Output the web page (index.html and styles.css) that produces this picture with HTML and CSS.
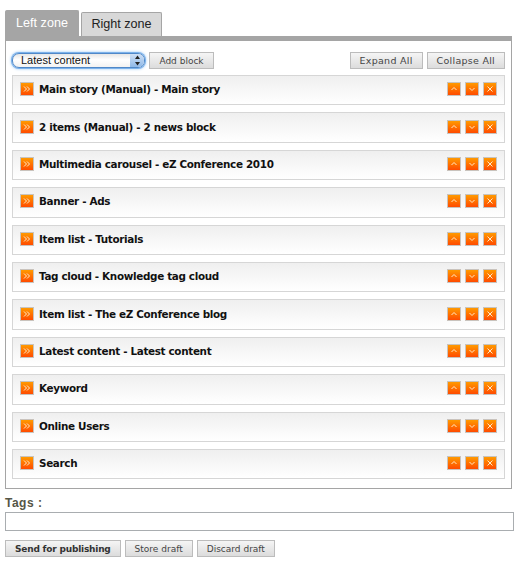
FILE: index.html
```html
<!DOCTYPE html>
<html lang="en">
<head>
<meta charset="utf-8">
<title>Zones</title>
<link rel="stylesheet" href="styles.css">
</head>
<body>
<div class="tabs">
  <a class="tab active">Left zone</a>
  <a class="tab">Right zone</a>
</div>
<div class="panel">
  <div class="toolbar">
    <span class="select-wrap">
      <select class="select"><option>Latest content</option></select>
      <span class="stepper"><svg width="7" height="11" viewBox="0 0 7 11"><path d="M3.5 0.5L6 4H1zM3.5 10.5L1 7H6z" fill="#222"/></svg></span>
    </span>
    <button class="btn add">Add block</button>
    <span class="spacer"></span>
    <button class="btn wide">Expand All</button>
    <button class="btn wide">Collapse All</button>
  </div>
  <div class="block"><span class="ico"><svg width="10" height="10" viewBox="0 0 10 10"><path d="M2 2.5L4.5 5L2 7.5M5 2.5L7.5 5L5 7.5" class="glyph"/></svg></span><span class="title">Main story (Manual) - Main story</span><span class="actions"><span class="ico"><svg width="10" height="10" viewBox="0 0 10 10"><path d="M2.5 6L5 3.5L7.5 6" class="glyph"/></svg></span><span class="ico"><svg width="10" height="10" viewBox="0 0 10 10"><path d="M2.5 4L5 6.5L7.5 4" class="glyph"/></svg></span><span class="ico"><svg width="10" height="10" viewBox="0 0 10 10"><path d="M2.5 2.5L7.5 7.5M7.5 2.5L2.5 7.5" class="glyph"/></svg></span></span></div>
  <div class="block"><span class="ico"><svg width="10" height="10" viewBox="0 0 10 10"><path d="M2 2.5L4.5 5L2 7.5M5 2.5L7.5 5L5 7.5" class="glyph"/></svg></span><span class="title">2 items (Manual) - 2 news block</span><span class="actions"><span class="ico"><svg width="10" height="10" viewBox="0 0 10 10"><path d="M2.5 6L5 3.5L7.5 6" class="glyph"/></svg></span><span class="ico"><svg width="10" height="10" viewBox="0 0 10 10"><path d="M2.5 4L5 6.5L7.5 4" class="glyph"/></svg></span><span class="ico"><svg width="10" height="10" viewBox="0 0 10 10"><path d="M2.5 2.5L7.5 7.5M7.5 2.5L2.5 7.5" class="glyph"/></svg></span></span></div>
  <div class="block"><span class="ico"><svg width="10" height="10" viewBox="0 0 10 10"><path d="M2 2.5L4.5 5L2 7.5M5 2.5L7.5 5L5 7.5" class="glyph"/></svg></span><span class="title">Multimedia carousel - eZ Conference 2010</span><span class="actions"><span class="ico"><svg width="10" height="10" viewBox="0 0 10 10"><path d="M2.5 6L5 3.5L7.5 6" class="glyph"/></svg></span><span class="ico"><svg width="10" height="10" viewBox="0 0 10 10"><path d="M2.5 4L5 6.5L7.5 4" class="glyph"/></svg></span><span class="ico"><svg width="10" height="10" viewBox="0 0 10 10"><path d="M2.5 2.5L7.5 7.5M7.5 2.5L2.5 7.5" class="glyph"/></svg></span></span></div>
  <div class="block"><span class="ico"><svg width="10" height="10" viewBox="0 0 10 10"><path d="M2 2.5L4.5 5L2 7.5M5 2.5L7.5 5L5 7.5" class="glyph"/></svg></span><span class="title">Banner - Ads</span><span class="actions"><span class="ico"><svg width="10" height="10" viewBox="0 0 10 10"><path d="M2.5 6L5 3.5L7.5 6" class="glyph"/></svg></span><span class="ico"><svg width="10" height="10" viewBox="0 0 10 10"><path d="M2.5 4L5 6.5L7.5 4" class="glyph"/></svg></span><span class="ico"><svg width="10" height="10" viewBox="0 0 10 10"><path d="M2.5 2.5L7.5 7.5M7.5 2.5L2.5 7.5" class="glyph"/></svg></span></span></div>
  <div class="block"><span class="ico"><svg width="10" height="10" viewBox="0 0 10 10"><path d="M2 2.5L4.5 5L2 7.5M5 2.5L7.5 5L5 7.5" class="glyph"/></svg></span><span class="title">Item list - Tutorials</span><span class="actions"><span class="ico"><svg width="10" height="10" viewBox="0 0 10 10"><path d="M2.5 6L5 3.5L7.5 6" class="glyph"/></svg></span><span class="ico"><svg width="10" height="10" viewBox="0 0 10 10"><path d="M2.5 4L5 6.5L7.5 4" class="glyph"/></svg></span><span class="ico"><svg width="10" height="10" viewBox="0 0 10 10"><path d="M2.5 2.5L7.5 7.5M7.5 2.5L2.5 7.5" class="glyph"/></svg></span></span></div>
  <div class="block"><span class="ico"><svg width="10" height="10" viewBox="0 0 10 10"><path d="M2 2.5L4.5 5L2 7.5M5 2.5L7.5 5L5 7.5" class="glyph"/></svg></span><span class="title">Tag cloud - Knowledge tag cloud</span><span class="actions"><span class="ico"><svg width="10" height="10" viewBox="0 0 10 10"><path d="M2.5 6L5 3.5L7.5 6" class="glyph"/></svg></span><span class="ico"><svg width="10" height="10" viewBox="0 0 10 10"><path d="M2.5 4L5 6.5L7.5 4" class="glyph"/></svg></span><span class="ico"><svg width="10" height="10" viewBox="0 0 10 10"><path d="M2.5 2.5L7.5 7.5M7.5 2.5L2.5 7.5" class="glyph"/></svg></span></span></div>
  <div class="block"><span class="ico"><svg width="10" height="10" viewBox="0 0 10 10"><path d="M2 2.5L4.5 5L2 7.5M5 2.5L7.5 5L5 7.5" class="glyph"/></svg></span><span class="title">Item list - The eZ Conference blog</span><span class="actions"><span class="ico"><svg width="10" height="10" viewBox="0 0 10 10"><path d="M2.5 6L5 3.5L7.5 6" class="glyph"/></svg></span><span class="ico"><svg width="10" height="10" viewBox="0 0 10 10"><path d="M2.5 4L5 6.5L7.5 4" class="glyph"/></svg></span><span class="ico"><svg width="10" height="10" viewBox="0 0 10 10"><path d="M2.5 2.5L7.5 7.5M7.5 2.5L2.5 7.5" class="glyph"/></svg></span></span></div>
  <div class="block"><span class="ico"><svg width="10" height="10" viewBox="0 0 10 10"><path d="M2 2.5L4.5 5L2 7.5M5 2.5L7.5 5L5 7.5" class="glyph"/></svg></span><span class="title">Latest content - Latest content</span><span class="actions"><span class="ico"><svg width="10" height="10" viewBox="0 0 10 10"><path d="M2.5 6L5 3.5L7.5 6" class="glyph"/></svg></span><span class="ico"><svg width="10" height="10" viewBox="0 0 10 10"><path d="M2.5 4L5 6.5L7.5 4" class="glyph"/></svg></span><span class="ico"><svg width="10" height="10" viewBox="0 0 10 10"><path d="M2.5 2.5L7.5 7.5M7.5 2.5L2.5 7.5" class="glyph"/></svg></span></span></div>
  <div class="block"><span class="ico"><svg width="10" height="10" viewBox="0 0 10 10"><path d="M2 2.5L4.5 5L2 7.5M5 2.5L7.5 5L5 7.5" class="glyph"/></svg></span><span class="title">Keyword</span><span class="actions"><span class="ico"><svg width="10" height="10" viewBox="0 0 10 10"><path d="M2.5 6L5 3.5L7.5 6" class="glyph"/></svg></span><span class="ico"><svg width="10" height="10" viewBox="0 0 10 10"><path d="M2.5 4L5 6.5L7.5 4" class="glyph"/></svg></span><span class="ico"><svg width="10" height="10" viewBox="0 0 10 10"><path d="M2.5 2.5L7.5 7.5M7.5 2.5L2.5 7.5" class="glyph"/></svg></span></span></div>
  <div class="block"><span class="ico"><svg width="10" height="10" viewBox="0 0 10 10"><path d="M2 2.5L4.5 5L2 7.5M5 2.5L7.5 5L5 7.5" class="glyph"/></svg></span><span class="title">Online Users</span><span class="actions"><span class="ico"><svg width="10" height="10" viewBox="0 0 10 10"><path d="M2.5 6L5 3.5L7.5 6" class="glyph"/></svg></span><span class="ico"><svg width="10" height="10" viewBox="0 0 10 10"><path d="M2.5 4L5 6.5L7.5 4" class="glyph"/></svg></span><span class="ico"><svg width="10" height="10" viewBox="0 0 10 10"><path d="M2.5 2.5L7.5 7.5M7.5 2.5L2.5 7.5" class="glyph"/></svg></span></span></div>
  <div class="block"><span class="ico"><svg width="10" height="10" viewBox="0 0 10 10"><path d="M2 2.5L4.5 5L2 7.5M5 2.5L7.5 5L5 7.5" class="glyph"/></svg></span><span class="title">Search</span><span class="actions"><span class="ico"><svg width="10" height="10" viewBox="0 0 10 10"><path d="M2.5 6L5 3.5L7.5 6" class="glyph"/></svg></span><span class="ico"><svg width="10" height="10" viewBox="0 0 10 10"><path d="M2.5 4L5 6.5L7.5 4" class="glyph"/></svg></span><span class="ico"><svg width="10" height="10" viewBox="0 0 10 10"><path d="M2.5 2.5L7.5 7.5M7.5 2.5L2.5 7.5" class="glyph"/></svg></span></span></div>
</div>
<label class="tags-label">Tags :</label>
<input class="tags-input" type="text">
<div class="footer">
  <button class="btn main">Send for publishing</button>
  <button class="btn">Store draft</button>
  <button class="btn">Discard draft</button>
</div>
</body>
</html>
```
FILE: styles.css
```css
* { box-sizing: border-box; }
html, body { margin: 0; padding: 0; background: #fff; }
body { padding: 10px 6px 0 5px; font-family: "DejaVu Sans", sans-serif; color: #000; width: 520px; height: 567px; overflow: hidden; }
.tabs { display: flex; gap: 2px; height: 26px; align-items: flex-end; }
.tab {
  display: block; padding: 0; width: 81px; white-space: nowrap;
  font: 12.6px/23px "Liberation Sans", sans-serif; border: 1px solid #a5a5a5; border-bottom: 0;
  border-radius: 2px 2px 0 0; background: #d8d8d8; color: #222;
  height: 24px; text-align: center;
}
.tab.active { background: #a5a5a5; color: #fff; height: 26px; line-height: 25px; width: 74px; }
.panel { border: 1px solid #a5a5a5; border-top: 5px solid #a5a5a5; padding: 11px 6px 0; height: 453px; width: 507px; }
.toolbar { display: flex; align-items: center; height: 17px; margin-bottom: 6.05px; gap: 4px; }
.select-wrap { position: relative; display: block; width: 133px; height: 15px; }
.select {
  appearance: none; -webkit-appearance: none; width: 100%; height: 100%; display: block;
  border: 1px solid #4f88c8; border-radius: 7px; padding: 0 0 2px 8px; outline: none;
  font: 11px "Liberation Sans", sans-serif; color: #111;
  background: linear-gradient(#e6e6e6, #fff 45%, #f2f2f2);
  box-shadow: 0 0 0 1px #7db2ea, 0 0 3px 1px #9cc8f3;
}
.stepper {
  position: absolute; right: 1px; top: 1px; width: 14px; height: 13px; border-radius: 0 6px 6px 0;
  background: linear-gradient(#cfe0f5, #8fb9e8); display: flex; align-items: center; justify-content: center;
}
.btn {
  height: 17px; padding: 0 9px; border: 1px solid #bcbcbc; border-radius: 0; cursor: pointer;
  background: linear-gradient(#f5f5f5, #dcdcdc); color: #444;
  font: 9px "DejaVu Sans", sans-serif;
}
.wide { padding: 0 9px; font-size: 9.5px; letter-spacing: .27px; }
.add { width: 65px; padding: 0; }
.spacer { flex: 1; }
.block {
  display: flex; align-items: center; height: 30.4px; margin-bottom: 7px; padding: 0 7px 2px;
  border: 1px solid #d6d6d6; background: linear-gradient(#efefef, #fff);
}
.title { margin-left: 5px; font-size: 10.4px; letter-spacing: -.33px; font-weight: bold; color: #111; }
.actions { margin-left: auto; display: flex; gap: 4px; }
.ico {
  display: flex; align-items: center; justify-content: center; width: 14px; height: 14px;
  background: linear-gradient(#ff9a00, #ff4b00); border: 1px solid #c9c3bd;
}
.ico svg { display: block; }
.glyph { fill: none; stroke: #ffe9c8; stroke-width: 1; }
.tags-label { display: block; margin-top: 7px; font: bold 12px/15px "Liberation Sans", sans-serif; color: #555546; letter-spacing: .5px; }
.tags-input { display: block; width: 509px; height: 19px; margin-top: 1px; border: 1px solid #a9adb0; background: #fff; }
.footer { display: flex; gap: 4px; margin-top: 9px; }
.footer .btn { color: #444; padding: 0 9px; }
.footer .main { font-weight: bold; color: #333; letter-spacing: -.2px; }
```
